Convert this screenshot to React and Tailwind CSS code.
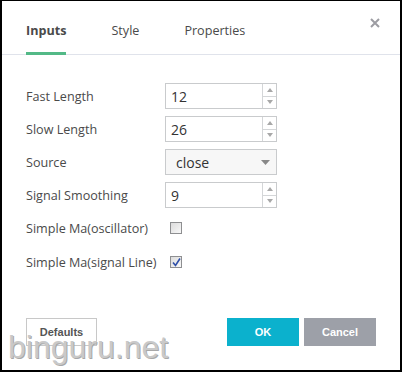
import { useState } from 'react';

const labelFont = "font-['Open_Sans','Noto_Sans',sans-serif]";

function Spinner() {
  return (
    <div className="flex w-[14px] flex-col border-l border-[#d4d6d8]">
      <div className="flex flex-1 items-center justify-center border-b border-[#d4d6d8]">
        <svg width="6" height="4" viewBox="0 0 6 4"><path d="M3 0 L6 4 L0 4 Z" fill="#a8a8a8" /></svg>
      </div>
      <div className="flex flex-1 items-center justify-center">
        <svg width="6" height="4" viewBox="0 0 6 4"><path d="M0 0 L6 0 L3 4 Z" fill="#a8a8a8" /></svg>
      </div>
    </div>
  );
}

function NumberField({ value }) {
  return (
    <div className="flex h-[26px] w-[112px] border border-[#c9cbcd] bg-white">
      <div className="flex flex-1 items-center pl-[5px] text-[14px] text-[#333]">{value}</div>
      <Spinner />
    </div>
  );
}

function Row({ label, children, className = '' }) {
  return (
    <div className={`flex items-center ${className}`}>
      <div className="w-[139px] pt-[2px] text-[12.6px] text-[#4a4a4a]">{label}</div>
      {children}
    </div>
  );
}

function Checkbox({ checked }) {
  return (
    <div className="ml-[5px] flex h-[12px] w-[12px] items-center justify-center border border-[#8e8f91] bg-gradient-to-br from-[#dcdcdc] to-[#f8f8f8]">
      {checked && (
        <svg width="9" height="9" viewBox="0 0 9 9">
          <path d="M1 4.5 L3.5 7.5 L8 0.5" fill="none" stroke="#2f4fa8" strokeWidth="1.6" />
        </svg>
      )}
    </div>
  );
}

export default function App() {
  const [tab] = useState('Inputs');
  const tabs = ['Inputs', 'Style', 'Properties'];

  return (
    <div className={`relative flex h-[372px] w-[402px] flex-col overflow-hidden border-b-2 border-l-2 border-r-2 border-t border-black bg-white ${labelFont}`}>
      {/* Tabs */}
      <div className="flex h-[54px] gap-[45px] border-b border-[#e0e3eb] pl-[24px]">
        {tabs.map(t => (
          <div
            key={t}
            className={`-mb-px pt-[21px] pb-[11px] text-[12.6px] leading-[18px] ${
              tab === t ? 'border-b-[3px] border-[#53b987] font-bold text-[#4a4a4a]' : 'border-b-[3px] border-transparent text-[#4a4a4a]'
            }`}
          >
            {t}
          </div>
        ))}
      </div>
      <svg className="absolute left-[368px] top-[17px]" width="10" height="10" viewBox="0 0 10 10">
        <path d="M1 1 L9 9 M9 1 L1 9" stroke="#9c9ca2" strokeWidth="2" />
      </svg>

      {/* Inputs */}
      <div className="flex flex-col gap-[7px] pl-[24px] pt-[28px]">
        <Row label="Fast Length"><NumberField value="12" /></Row>
        <Row label="Slow Length"><NumberField value="26" /></Row>
        <Row label="Source">
          <div className="flex h-[26px] w-[112px] items-center justify-between border border-[#c9cbcd] bg-[#f7f7f7] pl-[10px] pr-[6px] text-[14px] text-[#333]">
            <span>close</span>
            <svg width="9" height="5" viewBox="0 0 9 5"><path d="M0 0 L9 0 L4.5 5 Z" fill="#888" /></svg>
          </div>
        </Row>
        <Row label="Signal Smoothing"><NumberField value="9" /></Row>
        <Row label="Simple Ma(oscillator)" className="h-[26px]"><Checkbox /></Row>
        <Row label="Simple Ma(signal Line)" className="mt-[1px] h-[26px]"><Checkbox checked /></Row>
      </div>

      {/* Buttons */}
      <div className="mt-auto mb-[24px] flex items-center pl-[24px] pr-[24px] font-['Liberation_Sans',Arial,sans-serif] text-[11px] font-bold">
        <button className="h-[28px] w-[71px] border border-[#c8c8c8] bg-white text-[#555]">Defaults</button>
        <div className="flex-1" />
        <button className="h-[28px] w-[72px] bg-[#0bb1cd] text-white">OK</button>
        <button className="ml-[5px] h-[28px] w-[72px] bg-[#9da0a8] text-white">Cancel</button>
      </div>

      <div className="pointer-events-none absolute left-[6px] top-[326px] font-['Liberation_Sans',Arial,sans-serif] text-[32px] leading-[40px] text-[#c9c9c9] [text-shadow:1px_1px_0_#a8a8a8]">
        binguru.net
      </div>
    </div>
  );
}
